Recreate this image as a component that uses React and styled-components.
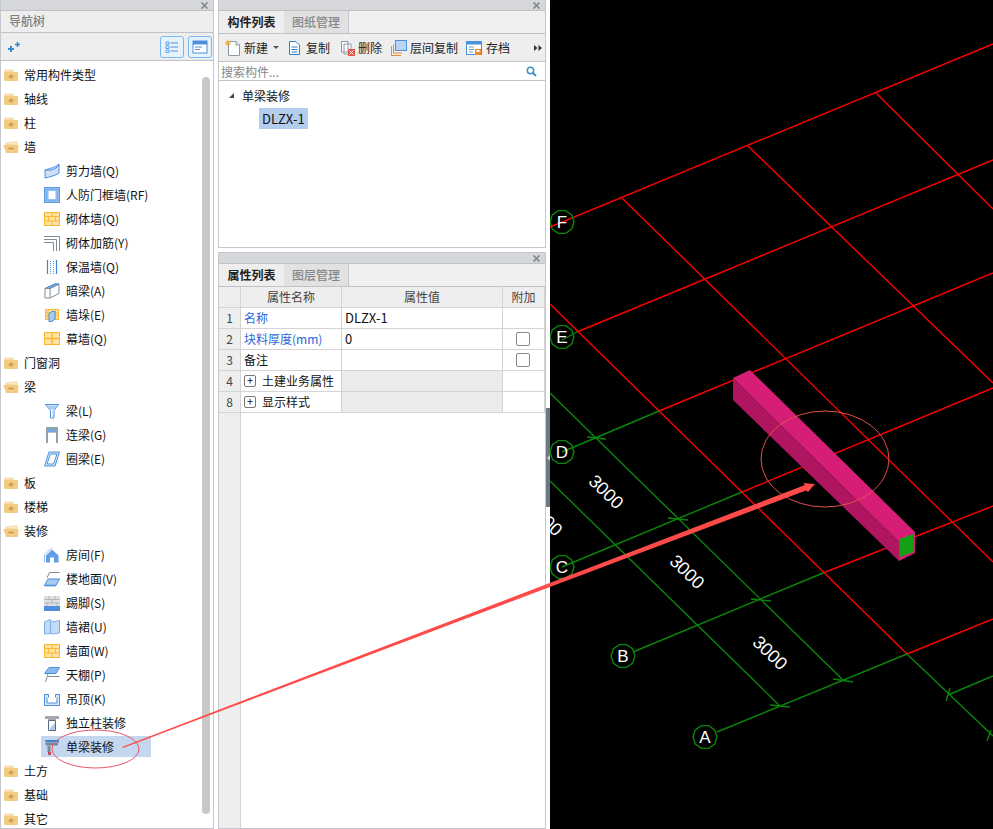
import React from "react";
import styled, { createGlobalStyle } from "styled-components";

const GlobalStyle = createGlobalStyle`
  html, body {
    margin: 0;
    padding: 0;
    background: #fff;
  }
  body {
    font-family: "Noto Sans CJK SC", "Noto Sans", sans-serif;
    font-size: 12px;
    color: #111;
  }
`;

const Page = styled.div`
  position: relative;
  display: flex;
  width: 993px;
  height: 829px;
  overflow: hidden;
  background: #fff;
`;

const Panel = styled.section`
  display: flex;
  flex-direction: column;
  box-sizing: border-box;
  border: 1px solid #c4c7cc;
  border-top: 0;
  background: #fff;
  overflow: hidden;
`;

const NavPanel = styled(Panel)`
  width: 214px;
  height: 829px;
  flex: none;
`;

const MiddleColumn = styled.div`
  display: flex;
  flex-direction: column;
  gap: 4px;
  width: 328px;
  height: 829px;
  margin-left: 4px;
  flex: none;
`;

const ListPanel = styled(Panel)`
  height: 248px;
  flex: none;
`;

const PropPanel = styled(Panel)`
  flex: 1;
  border-top: 1px solid #c4c7cc;
  min-height: 0;
`;

const Splitter = styled.div`
  width: 4px;
  height: 829px;
  flex: none;
  display: flex;
  flex-direction: column;
  padding-top: 408px;
  box-sizing: border-box;
`;

const SplitterGrip = styled.div`
  display: flex;
  align-items: center;
  height: 99px;
  background: #6c7884;
  &::before {
    content: "";
    border: 3px solid transparent;
    border-right: 3px solid #c9ced3;
    border-left: 0;
    margin-left: 1px;
  }
`;

const Canvas = styled.div`
  flex: 1;
  height: 829px;
  background: #000;
  overflow: hidden;
`;

const TitleStrip = styled.div`
  display: flex;
  align-items: center;
  justify-content: flex-end;
  height: 10px;
  padding-right: 5px;
  background: #d5d7db;
  border-bottom: 1px solid #bfc2c8;
  flex: none;
`;

const CloseMark = styled.svg`
  width: 7px;
  height: 7px;
  stroke: #7d8188;
  stroke-width: 1.5;
`;

const NavHeader = styled.div`
  height: 21px;
  line-height: 20px;
  padding-left: 8px;
  background: #eee;
  border-bottom: 1px solid #bfc2c8;
  color: #808080;
  font-weight: 500;
  flex: none;
`;

const NavTools = styled.div`
  display: flex;
  align-items: center;
  gap: 4px;
  height: 27px;
  padding: 0 1px 0 6px;
  background: #eee;
  border-bottom: 1px solid #bfc2c8;
  flex: none;
`;

const ToolSpacer = styled.div`
  flex: 1;
`;

const ViewButton = styled.div`
  display: flex;
  align-items: center;
  justify-content: center;
  box-sizing: border-box;
  width: 24px;
  height: 22px;
  border: 1px solid #78b8ef;
  border-radius: 3px;
  background: #e6f2fc;
`;

const TreeBody = styled.div`
  display: flex;
  flex: 1;
  min-height: 0;
`;

const TreeList = styled.div`
  flex: 1;
  padding-top: 1px;
  overflow: hidden;
`;

const TreeRow = styled.div`
  display: flex;
  align-items: center;
  height: 24px;
  white-space: nowrap;
`;

const GroupIcon = styled.span`
  display: flex;
  width: 16px;
  margin: 1px 5px 0 2px;
`;

const LeafLabel = styled.div`
  display: flex;
  align-items: center;
  gap: 6px;
  width: 107px;
  height: 21px;
  margin: 1px 0 0 40px;
  padding-left: 3px;
  line-height: 19px;
  background: ${(p) => (p.$selected ? "#c5d7ee" : "transparent")};
`;

const ScrollThumb = styled.div`
  width: 8px;
  margin: 16px 3px 14px 0;
  border-radius: 4px;
  background: #c8c8c8;
  flex: none;
`;

const Tabs = styled.div`
  display: flex;
  height: 22px;
  background: #f0f0f0;
  border-bottom: 1px solid #bfc2c8;
  flex: none;
`;

const Tab = styled.div`
  box-sizing: border-box;
  width: 65px;
  line-height: 22px;
  text-align: center;
  background: ${(p) => (p.$active ? "#eee" : "#e1e1e1")};
  color: ${(p) => (p.$active ? "#222" : "#888")};
  font-weight: ${(p) => (p.$active ? 700 : 500)};
  border-right: ${(p) => (p.$active ? "0" : "1px solid #c4c7cc")};
`;

const ListTools = styled.div`
  display: flex;
  align-items: center;
  height: 27px;
  padding-left: 6px;
  background: #eee;
  border-bottom: 1px solid #bfc2c8;
  flex: none;
`;

const ToolButton = styled.div`
  display: flex;
  align-items: center;
  gap: ${(p) => p.$gap ?? 4}px;
  margin-right: ${(p) => p.$after ?? 8}px;
  color: #222;
`;

const Caret = styled.span`
  margin-left: 2px;
  border: 3px solid transparent;
  border-top: 3px solid #555;
  border-bottom: 0;
`;

const MoreMark = styled.div`
  display: flex;
  margin-left: auto;
  margin-right: 3px;
`;

const SearchBar = styled.div`
  display: flex;
  align-items: center;
  justify-content: space-between;
  height: 18px;
  padding: 0 8px 0 2px;
  border-bottom: 1px solid #bfc2c8;
  color: #888;
  flex: none;
`;

const ListTree = styled.div`
  flex: 1;
  padding-top: 2px;
`;

const ListGroup = styled.div`
  display: flex;
  align-items: center;
  gap: 8px;
  height: 24px;
  padding-left: 10px;
`;

const Triangle = styled.span`
  width: 0;
  height: 0;
  border-style: solid;
  border-width: 0 0 5px 5px;
  border-color: transparent transparent #444 transparent;
`;

const ListItem = styled.div`
  width: 46px;
  height: 21px;
  line-height: 21px;
  margin: 1px 0 0 40px;
  padding-left: 3px;
  font-size: 13px;
  background: #b3cdee;
`;

const PropGrid = styled.div`
  display: grid;
  flex: 1;
  min-height: 0;
  grid-template-columns: 22px 101px 161px 42px;
  grid-template-rows: repeat(6, 21px) 1fr;
`;

const Cell = styled.div`
  display: flex;
  align-items: center;
  box-sizing: border-box;
  gap: 6px;
  padding: 0 0 1px ${(p) => p.$pad ?? 3}px;
  justify-content: ${(p) => (p.$center ? "center" : "flex-start")};
  border-right: 1px solid #d4d4d4;
  border-bottom: 1px solid #d4d4d4;
  white-space: nowrap;
  color: ${(p) => (p.$blue ? "#2467dc" : "#111")};
  background: ${(p) => (p.$grey ? "#ebebeb" : "#fff")};
`;

const ValueCell = styled(Cell)`
  font-size: 13px;
`;

const HeadCell = styled(Cell)`
  padding-left: 0;
  justify-content: center;
  background: #eee;
  color: #444;
`;

const NumCell = styled(HeadCell)``;

const Filler = styled.div`
  background: #eee;
  border-right: 1px solid #d4d4d4;
`;

const CheckBox = styled.span`
  box-sizing: border-box;
  width: 14px;
  height: 14px;
  margin-right: 2px;
  border: 1px solid #8a8a8a;
  border-radius: 2px;
  background: #fff;
`;

const ExpandBox = styled.span`
  display: flex;
  align-items: center;
  justify-content: center;
  box-sizing: border-box;
  width: 12px;
  height: 12px;
  border: 1px solid #777;
  border-radius: 2px;
  font-size: 11px;
  line-height: 1;
`;

const Overlay = styled.svg`
  position: absolute;
  left: 0;
  top: 0;
  width: 993px;
  height: 829px;
  pointer-events: none;
`;

const Blue = "#4a90dc";
const Gold = "#fbb82e";
const Grey = "#7f8b97";

const Svg = ({ children, w = 16, h = 16 }) => (
  <svg width={w} height={h} viewBox={`0 0 ${w} ${h}`} style={{ flex: "none", display: "block" }}>
    {children}
  </svg>
);

const Close = () => (
  <CloseMark viewBox="0 0 7 7">
    <path d="M0.5 0.5 6.5 6.5M6.5 0.5 0.5 6.5" />
  </CloseMark>
);

const FolderClosed = () => (
  <Svg h={14}>
    <path d="M1 4V2.6C1 2 1.6 1.5 2.5 1.5H9C10 1.5 11 2 11 3V4Z" fill="#f6dfae" />
    <rect x="1" y="4" width="14" height="9" rx="1" fill="#f1cc82" />
    <path d="M8 6.2V10.8M5.7 8.5H10.3" stroke="#c99a45" strokeWidth="1.6" />
  </Svg>
);

const FolderOpen = () => (
  <Svg h={14}>
    <path d="M3 5V3L14 1.5V5Z" fill="#f8e6bf" stroke="#ecd096" strokeWidth=".6" />
    <path d="M0.5 5H15.5L15 13H3Z" fill="#f1cc82" />
    <path d="M5.5 8.5H11" stroke="#c99a45" strokeWidth="1.6" />
  </Svg>
);

const Bricks = () => (
  <Svg>
    <rect x="0.5" y="1.5" width="15" height="13" fill="#ffe2a2" stroke={Gold} />
    <path d="M0 5.5H16M0 10H16M8 1.5V5.5M4.5 5.5V10M11.5 5.5V10M8 10V14.5" stroke={Gold} />
  </Svg>
);

const icons = {
  shear: (
    <Svg>
      <path d="M1 7C4 5.5 11 5 15 1V10C11 13 5 14 1 15Z" fill="#cfe0f6" stroke={Blue} />
      <path d="M1 7C5 8 11 7 15 2" fill="none" stroke={Blue} />
    </Svg>
  ),
  frame: (
    <Svg>
      <rect x="0.5" y="0.5" width="15" height="15" fill="#8cbaf0" stroke="#5e9be0" />
      <rect x="3" y="3" width="10" height="10" fill="#c2daf6" stroke="#6ba5e6" />
      <rect x="5" y="4" width="6" height="8" fill="#fff" />
    </Svg>
  ),
  brick: <Bricks />,
  rebar: (
    <Svg>
      <path d="M0 1.5H15.5V16M0 4.5H12.5V16M0 7.5H9.5V16" fill="none" stroke={Grey} />
    </Svg>
  ),
  insulate: (
    <Svg>
      <path d="M3.5 1V15M12.5 1V15" stroke="#3f86d6" strokeWidth="1.2" />
      <path d="M6.5 2V15M9.5 2V15" stroke="#5a9ae0" strokeDasharray="1 1" />
    </Svg>
  ),
  hidden: (
    <Svg>
      <path d="M1 5.5 11 1H15V10.5L6 15H1Z" fill="#fff" stroke={Grey} />
      <path d="M1 5.5 11 1H15L6 5.5Z" fill="#7eb0ea" stroke={Blue} />
      <path d="M6 5.5V15M6 5.5H1M15 1 6 5.5" stroke={Grey} fill="none" />
    </Svg>
  ),
  pier: (
    <Svg>
      <rect x="1.5" y="2.5" width="13" height="10" fill="#ffe2a2" stroke={Gold} />
      <path d="M1.5 6H14.5M1.5 9H14.5M11.5 2.5V12.5M4 2.5V12.5" stroke={Gold} />
      <path d="M5 6.5 8 4.5H11V12L8 14.5H5Z" fill="#a9cbf2" stroke={Blue} />
    </Svg>
  ),
  curtain: (
    <Svg>
      <rect x="0.5" y="1.5" width="15" height="12" fill="#ffe2a2" stroke={Gold} />
      <path d="M0 7.5H16M8 1.5V13.5" stroke={Gold} strokeWidth="1.4" />
    </Svg>
  ),
  beam: (
    <Svg>
      <path d="M1.5 1.5H14.5L10 7.5V15H6.5V7.5Z" fill="#fff" stroke={Blue} />
      <path d="M3 2.5H13L10 6.5H6Z" fill="#a9cbf2" />
      <path d="M9 8V14" stroke="#a9cbf2" />
    </Svg>
  ),
  link: (
    <Svg>
      <rect x="2" y="0" width="12" height="16" fill="#93a0ad" />
      <rect x="4" y="2" width="8" height="3" fill="#6ea6e6" />
      <rect x="4" y="5" width="8" height="11" fill="#fff" />
      <rect x="4" y="5" width="8" height="1" fill="#b9c2cb" />
    </Svg>
  ),
  ring: (
    <Svg>
      <path d="M5 1H15.5L11 15H0.5Z" fill="#dbe8f8" stroke={Blue} />
      <path d="M6.5 3H13L9.5 13H3Z" fill="#fff" stroke={Blue} />
    </Svg>
  ),
  room: (
    <Svg>
      <path d="M8 0.5 0.5 8V15.5" fill="none" stroke="#8fb9ec" />
      <path d="M8 2.5 14.5 8.5V15.5H10V10.5H6V15.5H2V8.5Z" fill="#5f9ee6" />
    </Svg>
  ),
  floor: (
    <Svg>
      <path d="M15.5 1.5H5.5L3 7" fill="none" stroke={Grey} />
      <path d="M4 8H15.5L12 14.5H0.5Z" fill="#a9cbf2" stroke={Blue} />
      <path d="M0.5 14.5H12" stroke={Blue} strokeWidth="1.6" />
    </Svg>
  ),
  skirt: (
    <Svg>
      <rect y="1" width="16" height="10" fill="#dfe0e1" />
      <path d="M0 4.5H16M0 8H16M5 1V4.5M11 1V4.5M8 4.5V8M3 8V11M13 8V11" stroke="#b4b6b8" />
      <rect y="11" width="16" height="5" fill="#4e8fdc" />
    </Svg>
  ),
  dado: (
    <Svg>
      <path d="M0.5 3 6 0.5 8.5 3 15.5 1.5V14L8.5 15 6 14.5 0.5 15Z" fill="#c4daf5" stroke="#7aaee9" />
      <path d="M6.5 1V14.5" stroke="#7aaee9" />
    </Svg>
  ),
  wall: <Bricks />,
  ceiling: (
    <Svg>
      <path d="M5 0.5H15.5L12 6.5H0.5Z" fill="#8cbaf0" stroke={Blue} />
      <path d="M4 7 1.5 15M4 9.5H15.5" fill="none" stroke={Grey} />
    </Svg>
  ),
  hung: (
    <Svg>
      <path d="M0.5 3.5H4.5V7.5H11.5V3.5H15.5V14.5H0.5Z" fill="#dbe8f8" stroke={Blue} />
      <path d="M3 6.5V12H13V6.5" fill="#fff" stroke={Blue} />
    </Svg>
  ),
  column: (
    <Svg>
      <path d="M1 1H15V4H12V5H4V4H1Z" fill="#a3a9af" />
      <path d="M4.5 5.5H11.5V15.5H4.5Z" fill="#fff" stroke="#5a6a7a" />
      <path d="M11 8 6 13V15H11Z" fill="#a9cbf2" />
    </Svg>
  ),
  single: (
    <Svg>
      <path d="M1 1H15V3.5H2Z" fill="#3f82d0" />
      <path d="M1 4H14V6.5H2Z" fill="#7b8894" />
      <path d="M5 7V13" stroke="#7b8894" strokeWidth="3" />
      <path d="M4 13H7V16H4Z" fill="#c24a5c" />
    </Svg>
  ),
};

const nav = [
  { label: "常用构件类型" },
  { label: "轴线" },
  { label: "柱" },
  {
    label: "墙",
    open: true,
    items: [
      ["shear", "剪力墙(Q)"],
      ["frame", "人防门框墙(RF)"],
      ["brick", "砌体墙(Q)"],
      ["rebar", "砌体加筋(Y)"],
      ["insulate", "保温墙(Q)"],
      ["hidden", "暗梁(A)"],
      ["pier", "墙垛(E)"],
      ["curtain", "幕墙(Q)"],
    ],
  },
  { label: "门窗洞" },
  {
    label: "梁",
    open: true,
    items: [
      ["beam", "梁(L)"],
      ["link", "连梁(G)"],
      ["ring", "圈梁(E)"],
    ],
  },
  { label: "板" },
  { label: "楼梯" },
  {
    label: "装修",
    open: true,
    items: [
      ["room", "房间(F)"],
      ["floor", "楼地面(V)"],
      ["skirt", "踢脚(S)"],
      ["dado", "墙裙(U)"],
      ["wall", "墙面(W)"],
      ["ceiling", "天棚(P)"],
      ["hung", "吊顶(K)"],
      ["column", "独立柱装修"],
      ["single", "单梁装修", true],
    ],
  },
  { label: "土方" },
  { label: "基础" },
  { label: "其它" },
];

const NavTree = () => (
  <TreeList>
    {nav.map((group) => (
      <React.Fragment key={group.label}>
        <TreeRow>
          <GroupIcon>{group.open ? <FolderOpen /> : <FolderClosed />}</GroupIcon>
          {group.label}
        </TreeRow>
        {(group.items || []).map(([icon, label, selected]) => (
          <TreeRow key={label}>
            <LeafLabel $selected={selected}>
              {icons[icon]}
              {label}
            </LeafLabel>
          </TreeRow>
        ))}
      </React.Fragment>
    ))}
  </TreeList>
);

const ListToolbar = () => (
  <ListTools>
    <ToolButton $gap={3} $after={9}>
      <Svg>
        <path d="M3.5 1.5H11L14.5 5V15.5H3.5Z" fill="#fff" stroke="#8d98a3" />
        <path d="M11 1.5V5H14.5" fill="#e5e8eb" stroke="#8d98a3" />
        <path d="M3 0V6M0 3H6M1 1 5 5M5 1 1 5" stroke="#f4a62a" />
      </Svg>
      新建
      <Caret />
    </ToolButton>
    <ToolButton $gap={5} $after={10}>
      <Svg w={13}>
        <path d="M1.5 1.5H8L11.5 5V14.5H1.5Z" fill="#fff" stroke="#2f7fd1" />
        <path d="M3.5 7H9.5M3.5 9.5H9.5M3.5 12H9.5" stroke="#2f7fd1" />
      </Svg>
      复制
    </ToolButton>
    <ToolButton $gap={3} $after={9}>
      <Svg w={15}>
        <path d="M1.5 1.5H8V12H1.5ZM4 4H11V14H4Z" fill="#fff" stroke="#8d98a3" />
        <rect x="8" y="9" width="7" height="7" fill="#e2574c" />
        <path d="M9.5 10.5 13.5 14.5M13.5 10.5 9.5 14.5" stroke="#fff" />
      </Svg>
      删除
    </ToolButton>
    <ToolButton $gap={3} $after={8}>
      <Svg>
        <path d="M0.5 6V15.5H10M2.5 4.5V13H11" fill="none" stroke="#ee8a2c" />
        <rect x="4.5" y="0.5" width="11" height="10" fill="#b9d4f5" stroke="#4a90dc" />
      </Svg>
      层间复制
    </ToolButton>
    <ToolButton $gap={4} $after={0}>
      <Svg>
        <rect x="0.5" y="1.5" width="15" height="13" fill="#fff" stroke="#4a90dc" />
        <rect x="0.5" y="1.5" width="15" height="3" fill="#4a90dc" />
        <path d="M3 7H8M3 9.5H8M3 12H7" stroke="#8d98a3" />
        <rect x="9" y="9" width="6" height="6" fill="#ee8a2c" />
        <rect x="10.5" y="10" width="3" height="2" fill="#fff" />
      </Svg>
      存档
    </ToolButton>
    <MoreMark>
      <Svg w={8} h={6}>
        <path d="M0 0 3.5 3 0 6ZM4.5 0 8 3 4.5 6Z" fill="#333" />
      </Svg>
    </MoreMark>
  </ListTools>
);

const props = [
  { no: "1", name: "名称", blue: true, value: "DLZX-1" },
  { no: "2", name: "块料厚度(mm)", blue: true, value: "0", check: true },
  { no: "3", name: "备注", value: "", check: true },
  { no: "4", name: "土建业务属性", group: true },
  { no: "8", name: "显示样式", group: true },
];

const PropTable = () => (
  <PropGrid>
    <HeadCell />
    <HeadCell>属性名称</HeadCell>
    <HeadCell>属性值</HeadCell>
    <HeadCell>附加</HeadCell>
    {props.map((row) => (
      <React.Fragment key={row.no}>
        <NumCell>{row.no}</NumCell>
        <Cell $blue={row.blue}>
          {row.group && <ExpandBox>+</ExpandBox>}
          {row.name}
        </Cell>
        <ValueCell $grey={row.group}>{row.value}</ValueCell>
        <Cell $center $pad={0}>
          {row.check && <CheckBox />}
        </Cell>
      </React.Fragment>
    ))}
    <Filler />
  </PropGrid>
);

const RED = "#ff0000";
const GREEN = "#0a860a";

const redLines = [
  [550, 227, 993, 44],
  [577, 332, 993, 160],
  [659, 411, 993, 273],
  [742, 492, 993, 388],
  [823, 573, 993, 506],
  [907, 654, 993, 619],
  [622, 198, 993, 562],
  [748, 146, 993, 383],
  [876, 93, 993, 209],
  [550, 304, 907, 654],
];

const greenLines = [
  [562, 340, 577, 332],
  [562, 452, 659, 411],
  [562, 567, 742, 492],
  [633, 652, 823, 573],
  [717, 732, 907, 654],
  [948, 695, 993, 676],
  [907, 654, 993, 736],
  [550, 393, 843, 680],
  [550, 481, 780, 706],
  [587, 437, 606, 439],
  [668, 518, 688, 520],
  [751, 599, 771, 601],
  [833, 679, 853, 682],
  [770, 705, 790, 707],
  [950, 688, 946, 701],
  [991, 730, 987, 741],
];

const bubbles = [
  ["F", 562, 222],
  ["E", 562, 337],
  ["D", 562, 452],
  ["C", 562, 567],
  ["B", 623, 656],
  ["A", 705, 737],
];

const dims = [
  [606, 492],
  [687, 572],
  [770, 653],
  [545, 519],
];

const octagon = (cx, cy, r = 12) =>
  Array.from({ length: 10 }, (_, i) => {
    const a = (Math.PI * 2 * i) / 10;
    return `${(cx + r * Math.cos(a)).toFixed(1)},${(cy + r * Math.sin(a)).toFixed(1)}`;
  }).join(" ");

const GridDrawing = () => (
  <svg width="443" height="829" viewBox="550 0 443 829" style={{ display: "block" }}>
    {redLines.map(([x1, y1, x2, y2]) => (
      <line key={`${x1}-${y1}`} x1={x1} y1={y1} x2={x2} y2={y2} stroke={RED} strokeWidth="1.4" />
    ))}
    {greenLines.map(([x1, y1, x2, y2]) => (
      <line key={`${x1}-${y1}`} x1={x1} y1={y1} x2={x2} y2={y2} stroke={GREEN} strokeWidth="1.4" />
    ))}
    {bubbles.map(([label, x, y]) => (
      <g key={label}>
        <polygon points={octagon(x, y)} fill="none" stroke={GREEN} strokeWidth="1.4" />
        <text x={x} y={y + 6} textAnchor="middle" fill="#fff" fontSize="17" fontFamily='"Liberation Sans", sans-serif'>
          {label}
        </text>
      </g>
    ))}
    {dims.map(([x, y]) => (
      <text
        key={x}
        x={x}
        y={y + 6}
        textAnchor="middle"
        fill="#fff"
        fontSize="18"
        fontFamily='"Liberation Sans", sans-serif'
        transform={`rotate(44 ${x} ${y})`}
      >
        3000
      </text>
    ))}
    <polygon points="733,378 750,370 915,532 899,542" fill="#d71e76" />
    <polygon points="733,378 899,542 899,561 733,400" fill="#b0165f" />
    <polygon points="899,540 915,532 915,553 899,561" fill="#d71e76" />
    <polygon points="900,539 913,534 913,552 900,557" fill="#13a015" />
  </svg>
);

const Annotations = () => (
  <Overlay viewBox="0 0 993 829">
    <ellipse cx="95.5" cy="749" rx="43.5" ry="19" fill="none" stroke="#e8566a" strokeWidth="1" />
    <ellipse cx="825" cy="459" rx="64" ry="48" fill="none" stroke="#e2504c" strokeWidth="1" />
    <polygon points="122,747 805,485 803,483 815,484 808,492 806,490.5 123,748" fill="#ff4a4a" />
  </Overlay>
);

const App = () => (
  <Page>
    <GlobalStyle />
    <NavPanel>
      <TitleStrip>
        <Close />
      </TitleStrip>
      <NavHeader>导航树</NavHeader>
      <NavTools>
        <Svg w={14} h={14}>
          <path d="M4 6V12M1 9H7" stroke="#3f86d6" strokeWidth="2" />
          <path d="M10.5 2V7M8 4.5H13" stroke="#3f86d6" strokeWidth="1.6" />
        </Svg>
        <ToolSpacer />
        <ViewButton>
          <Svg w={14} h={14}>
            <path d="M1 2H4V4.5H1ZM1 6H4V8.5H1ZM1 10H4V12.5H1Z" fill="none" stroke="#4a90dc" strokeWidth=".8" />
            <path d="M5.5 3H13M5.5 7H13M5.5 11H13" stroke="#4a90dc" />
          </Svg>
        </ViewButton>
        <ViewButton>
          <Svg w={16} h={14}>
            <rect x="1" y="1" width="14" height="12" fill="#fff" stroke="#4a90dc" />
            <rect x="1" y="1" width="14" height="3.5" fill="#4a90dc" />
            <path d="M3 7H10M3 9.5H8" stroke="#4a90dc" />
          </Svg>
        </ViewButton>
      </NavTools>
      <TreeBody>
        <NavTree />
        <ScrollThumb />
      </TreeBody>
    </NavPanel>

    <MiddleColumn>
      <ListPanel>
        <TitleStrip>
          <Close />
        </TitleStrip>
        <Tabs>
          <Tab $active>构件列表</Tab>
          <Tab>图纸管理</Tab>
        </Tabs>
        <ListToolbar />
        <SearchBar>
          搜索构件...
          <Svg w={11} h={11}>
            <circle cx="4.5" cy="4.5" r="3.2" fill="none" stroke="#3f94c8" strokeWidth="1.5" />
            <path d="M7 7 10 10" stroke="#3f94c8" strokeWidth="2" />
          </Svg>
        </SearchBar>
        <ListTree>
          <ListGroup>
            <Triangle />
            单梁装修
          </ListGroup>
          <ListItem>DLZX-1</ListItem>
        </ListTree>
      </ListPanel>
      <PropPanel>
        <TitleStrip>
          <Close />
        </TitleStrip>
        <Tabs>
          <Tab $active>属性列表</Tab>
          <Tab>图层管理</Tab>
        </Tabs>
        <PropTable />
      </PropPanel>
    </MiddleColumn>

    <Splitter>
      <SplitterGrip />
    </Splitter>

    <Canvas>
      <GridDrawing />
    </Canvas>

    <Annotations />
  </Page>
);

export default App;
